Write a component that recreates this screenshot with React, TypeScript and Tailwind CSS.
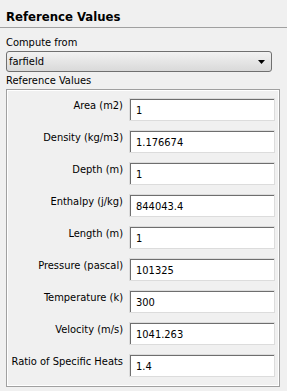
import React from "react";

const rows: [string, string][] = [
  ["Area (m2)", "1"],
  ["Density (kg/m3)", "1.176674"],
  ["Depth (m)", "1"],
  ["Enthalpy (j/kg)", "844043.4"],
  ["Length (m)", "1"],
  ["Pressure (pascal)", "101325"],
  ["Temperature (k)", "300"],
  ["Velocity (m/s)", "1041.263"],
  ["Ratio of Specific Heats", "1.4"],
];

function Field({ label, value }: { label: string; value: string }) {
  return (
    <div className="flex h-[23px] items-start">
      <div className="w-[115px] shrink-0 pt-[1px] text-right leading-[14px] whitespace-nowrap">{label}</div>
      <div className="ml-[6px] h-[23px] w-[146px] border border-[#dcdcdc] bg-white">
        <div className="h-full border-l border-t border-[#6e6e6e] pl-[5px] pt-[4px] leading-[14px]">
          {value}
        </div>
      </div>
    </div>
  );
}

export default function App() {
  return (
    <div className="h-[391px] w-[287px] overflow-hidden bg-[#f0f0f0] text-[11px] text-black [font-family:'DejaVu_Sans_Condensed','DejaVu_Sans',sans-serif]">
      <div className="h-[28px] border-b border-[#a0a0a0] pl-[6px] pt-[9px] text-[13px] font-bold leading-[16px]">
        Reference Values
      </div>
      <div className="px-[6px]">
        <div className="mt-[8px] leading-[14px]">Compute from</div>
        <div className="mt-[1px] flex h-[21px] w-[266px] items-center justify-between rounded-[3px] border border-[#707070] bg-gradient-to-b from-[#f2f2f2] to-[#d9d9d9] pl-[2px] pr-[6px]">
          <span className="leading-[14px]">farfield</span>
          <svg width="7" height="4" viewBox="0 0 7 4">
            <path d="M0 0h7L3.5 4z" fill="#000" />
          </svg>
        </div>
        <div className="mt-[2px] leading-[14px]">Reference Values</div>
        <div className="mt-[1px] h-[298px] w-[274px] border border-[#a0a0a0]">
          <div className="flex h-full flex-col gap-[9px] border border-white pt-[7px]">
            {rows.map(([l, v]) => (
              <Field key={l} label={l} value={v} />
            ))}
          </div>
        </div>
      </div>
    </div>
  );
}
